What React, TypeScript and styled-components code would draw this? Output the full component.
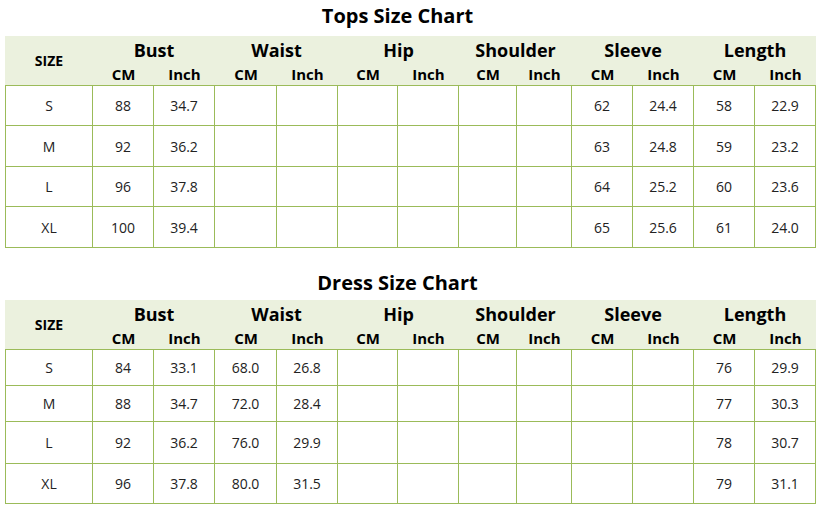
import React from "react";
import styled, { createGlobalStyle } from "styled-components";

const Global = createGlobalStyle`
  html, body { margin: 0; padding: 0; background: #fff; }
  body { font-family: "Open Sans", "Noto Sans", Arial, sans-serif; color: #000; }
`;

const COLS = [88, 61, 61, 62, 61, 60, 61, 58, 55, 61, 61, 61, 61];
const GROUPS = ["Bust", "Waist", "Hip", "Shoulder", "Sleeve", "Length"];

const Page = styled.div`
  width: 822px;
  padding-left: 5px;
  box-sizing: border-box;
  display: flex;
  flex-direction: column;
`;

const Section = styled.section<{ $top: number }>`
  margin-top: ${(p) => p.$top}px;
  display: flex;
  flex-direction: column;
`;

const Title = styled.h2<{ $gap: number }>`
  margin: 0 0 ${(p) => p.$gap}px 0;
  height: 32px;
  line-height: 32px;
  font-size: 20px;
  font-weight: 700;
  text-align: center;
  width: 785px;
`;

const Grid = styled.div<{ $rows: string }>`
  display: grid;
  grid-template-columns: ${COLS.map((c) => c + "px").join(" ")};
  grid-template-rows: 28px 21px ${(p) => p.$rows};
  width: 811px;
`;

const HeadCell = styled.div<{ $span?: number; $rowSpan?: number; $size: number }>`
  background: #ebf1de;
  grid-column: span ${(p) => p.$span ?? 1};
  grid-row: span ${(p) => p.$rowSpan ?? 1};
  display: flex;
  align-items: center;
  justify-content: center;
  font-weight: 700;
  font-size: ${(p) => p.$size}px;
  line-height: 1;
  color: #000;
`;

const GroupCell = styled(HeadCell)`
  align-items: flex-end;
  padding-bottom: 5px;
`;

const Cell = styled.div<{ $first: boolean; $topRow: boolean }>`
  display: flex;
  align-items: center;
  justify-content: center;
  font-size: 14px;
  color: #222;
  border-right: 1px solid #9bbb59;
  border-bottom: 1px solid #9bbb59;
  border-left: ${(p) => (p.$first ? "1px solid #9bbb59" : "none")};
  border-top: ${(p) => (p.$topRow ? "1px solid #9bbb59" : "none")};
  box-sizing: border-box;
`;

type Row = (string | number | null)[];

function Chart({ title, rows, heights, gap, top }: { title: string; rows: Row[]; heights: string; gap: number; top: number }) {
  return (
    <Section $top={top}>
      <Title $gap={gap}>{title}</Title>
      <Grid $rows={heights}>
        <HeadCell $rowSpan={2} $size={14}>SIZE</HeadCell>
        {GROUPS.map((g) => (
          <GroupCell key={g} $span={2} $size={18}>{g}</GroupCell>
        ))}
        {GROUPS.map((g) => (
          <React.Fragment key={g + "s"}>
            <HeadCell $size={15}>CM</HeadCell>
            <HeadCell $size={15}>Inch</HeadCell>
          </React.Fragment>
        ))}
        {rows.map((r, ri) =>
          r.map((v, ci) => (
            <Cell key={ri + "-" + ci} $first={ci === 0} $topRow={ri === 0}>
              {v ?? ""}
            </Cell>
          ))
        )}
      </Grid>
    </Section>
  );
}

const _ = null;
const tops: Row[] = [
  ["S", 88, "34.7", _, _, _, _, _, _, 62, "24.4", 58, "22.9"],
  ["M", 92, "36.2", _, _, _, _, _, _, 63, "24.8", 59, "23.2"],
  ["L", 96, "37.8", _, _, _, _, _, _, 64, "25.2", 60, "23.6"],
  ["XL", 100, "39.4", _, _, _, _, _, _, 65, "25.6", 61, "24.0"],
];
const dress: Row[] = [
  ["S", 84, "33.1", "68.0", "26.8", _, _, _, _, _, _, 76, "29.9"],
  ["M", 88, "34.7", "72.0", "28.4", _, _, _, _, _, _, 77, "30.3"],
  ["L", 92, "36.2", "76.0", "29.9", _, _, _, _, _, _, 78, "30.7"],
  ["XL", 96, "37.8", "80.0", "31.5", _, _, _, _, _, _, 79, "31.1"],
];

export default function App() {
  return (
    <Page>
      <Global />
      <Chart title="Tops Size Chart" rows={tops} heights="41px 41px 40px 41px" gap={4} top={0} />
      <Chart title="Dress Size Chart" rows={dress} heights="37px 36px 42px 40px" gap={1} top={19} />
    </Page>
  );
}
